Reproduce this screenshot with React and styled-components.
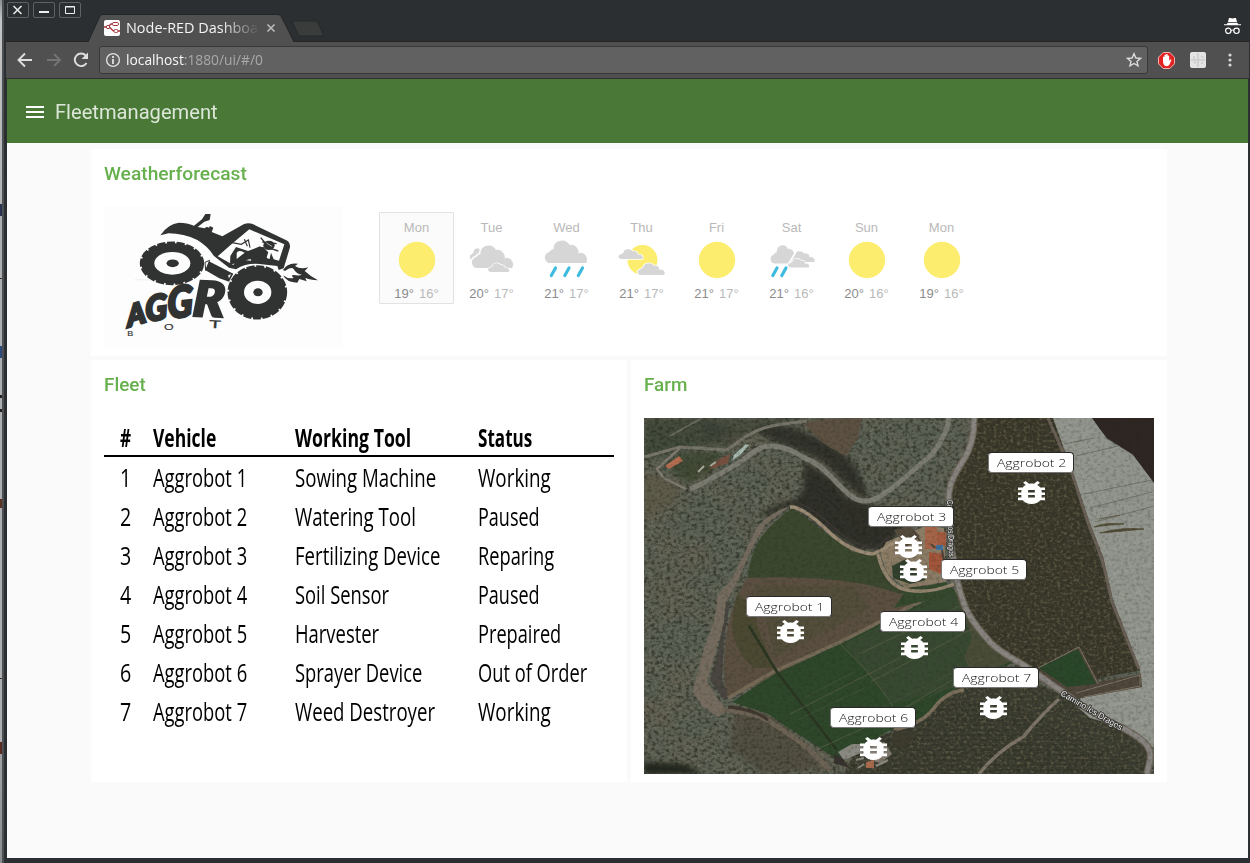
import React, { useLayoutEffect, useRef } from "react";
import styled, { createGlobalStyle } from "styled-components";

const GlobalStyle = createGlobalStyle`
  * { box-sizing: border-box; }
  html, body { margin: 0; padding: 0; }
  body { overflow: hidden; background: #a9aaab; font-family: Roboto, "Liberation Sans", sans-serif; }
  svg { display: block; }
`;

/* ---------- text stretched to a known width ---------- */
const FitSpan = styled.span`
  display: inline-block;
  white-space: pre;
  transform-origin: 0 50%;
`;
const FitBox = styled.span`
  display: block;
  width: ${(p) => p.$width}px;
`;
function Fit({ width, children }) {
  const ref = useRef(null);
  useLayoutEffect(() => {
    const apply = () => {
      const el = ref.current;
      if (el) el.style.transform = `scaleX(${width / el.offsetWidth})`;
    };
    apply();
    document.fonts.ready.then(apply);
  }, [width]);
  return (
    <FitBox $width={width}>
      <FitSpan ref={ref}>{children}</FitSpan>
    </FitBox>
  );
}

/* ---------- browser window ---------- */
const Desktop = styled.div`
  display: flex;
  width: 1250px;
  height: 863px;
  background: #2b2f31;
`;
const Behind = styled.div`
  flex: none;
  width: 2px;
  background: linear-gradient(
    #8f9192 0, #c4c5c6 20px, #b0b1b2 204px, #2b3350 204px, #2b3350 216px, #adaeaf 216px,
    #adaeaf 278px, #333 278px, #333 279px, #adaeaf 279px, #adaeaf 346px, #2d4a78 346px,
    #2d4a78 358px, #adaeaf 358px, #adaeaf 395px, #222 395px, #222 398px, #adaeaf 398px,
    #adaeaf 409px, #222 409px, #222 412px, #adaeaf 412px, #adaeaf 499px, #5b3425 499px,
    #5b3425 508px, #adaeaf 508px, #adaeaf 678px, #333 678px, #333 679px, #adaeaf 679px,
    #adaeaf 742px, #5b2a20 742px, #5b2a20 754px, #9fa0a2 754px, #8a8d90 863px
  );
`;
const Frame = styled.div`
  flex: 1;
  display: flex;
  flex-direction: column;
  border-left: 2px solid #4c5052;
  padding: 0 0 5px;
  background: #2b2f31;
`;
const TitleBar = styled.div`
  display: flex;
  height: 41px;
  flex: none;
  background: #2b2f31;
`;
const WindowButtons = styled.div`
  display: flex;
  gap: 4px;
  padding: 2px 0 0 3px;
  width: 84px;
`;
const WindowButton = styled.div`
  width: 22px;
  height: 16px;
  border: 1px solid #5e6264;
  border-radius: 2px;
`;
const Tab = styled.div`
  position: relative;
  display: flex;
  width: 206px;
  height: 28px;
  margin-top: 14px;
  padding: 0 16px 0 16px;
  align-items: center;
`;
const TabShape = styled.svg`
  position: absolute;
  left: 0;
  top: 0;
`;
const TabTitle = styled.div`
  position: relative;
  width: 132px;
  margin-left: 6px;
  color: #f4f4f4;
  font: 500 14px/20px "Open Sans", "Noto Sans", sans-serif;
  mask-image: linear-gradient(90deg, #000 72%, transparent 101%);
`;
const TabIcon = styled.svg`
  position: relative;
`;
const CloseIcon = styled.svg`
  position: relative;
  margin-left: 8px;
`;
const NewTab = styled.svg`
  margin: 20px 0 0 -4px;
`;
const Incognito = styled.svg`
  margin: 18px 9px 0 auto;
`;
const NavBar = styled.div`
  display: flex;
  align-items: center;
  flex: none;
  height: 38px;
  margin: 0 1px 0 2px;
  padding: 0 8px 0 10px;
  background: #505050;
  border-top: 1px solid #252525;
  border-bottom: 1px solid #303030;
`;
const NavIcon = styled.svg`
  flex: none;
  margin-right: ${(p) => p.$gap ?? 0}px;
`;
const AddressBar = styled.div`
  display: flex;
  align-items: center;
  width: 1049px;
  height: 28px;
  margin-right: 10px;
  padding: 0 5px;
  background: #616161;
  border: 1px solid #393939;
  border-radius: 3px;
`;
const Url = styled.div`
  flex: 1;
  margin-left: 5px;
  color: #a9a9a9;
  font: 500 14px/20px "Open Sans", "Noto Sans", sans-serif;
  b { font-weight: 500; color: #f8f8f8; }
`;
const Viewport = styled.div`
  flex: 1;
  margin: 0 2px 0 3px;
  background: #fafafa;
`;

/* ---------- dashboard ---------- */
const AppBar = styled.header`
  display: flex;
  align-items: center;
  height: 64px;
  padding: 1px 0 0 19px;
  gap: 11px;
  background: #4a7937;
  color: #dde7d9;
  font: 400 20px/24px Roboto, sans-serif;
`;
const Board = styled.main`
  display: grid;
  grid-template-columns: 536px 536px;
  grid-template-rows: 207px 422px;
  gap: 4px;
  padding: 6px 0 0 84px;
`;
const Card = styled.section`
  grid-column: ${(p) => (p.$wide ? "1 / 3" : "auto")};
  background: #fff;
  padding: 13px 13px 0;
`;
const CardTitle = styled.h2`
  margin: 0;
  color: #66b04d;
  font: 500 18px/24px Roboto, sans-serif;
`;
const WeatherRow = styled.div`
  display: flex;
  align-items: flex-start;
  margin-top: 20px;
`;
const Forecast = styled.div`
  display: flex;
  margin: 6px 0 0 36px;
`;
const Day = styled.div`
  width: 75px;
  height: 92px;
  padding-top: 7px;
  display: flex;
  flex-direction: column;
  align-items: center;
  border: 1px solid ${(p) => (p.$active ? "#e2e2e2" : "transparent")};
  border-radius: 1px;
  background: ${(p) => (p.$active ? "#fbfbfb" : "transparent")};
  color: #b9b9b9;
  font: 13px/15px "Liberation Sans", Arial, sans-serif;
`;
const Temps = styled.div`
  display: flex;
  gap: 5px;
  b { font-weight: 400; color: #8b8b8b; }
`;

const Grid = styled.div`
  margin-top: 21px;
`;
const GridRow = styled.div`
  display: grid;
  grid-template-columns: 49px 142px 183px 136px;
  align-items: center;
  height: 39px;
  color: #000;
  font: ${(p) => (p.$head ? 700 : 400)} 25px/38px "Open Sans", "Noto Sans", sans-serif;
  border-bottom: ${(p) => (p.$head ? "2px solid #000" : "0")};
`;
const NumberCell = styled.div`
  padding-left: 16px;
`;

const MapBox = styled.div`
  position: relative;
  width: 510px;
  height: 356px;
  margin-top: 21px;
  overflow: hidden;
`;
const PinLabel = styled.div`
  position: absolute;
  left: ${(p) => p.$x}px;
  top: ${(p) => p.$y}px;
  width: 86px;
  height: 21px;
  padding: 0 0 0 8px;
  background: #fff;
  border: 1px solid #292929;
  border-left-color: #777;
  border-bottom-color: #777;
  border-radius: 4px;
  color: #111;
  font: 300 11.5px/19px "Open Sans", "Noto Sans", sans-serif;
`;
const Bug = styled.svg`
  position: absolute;
  left: ${(p) => p.$x}px;
  top: ${(p) => p.$y}px;
`;

/* ---------- weather icons ---------- */
const Cloud = ({ x, y, w, h, halo }) => (
  <svg x={x} y={y} width={w} height={h} viewBox="0 0 40 23" preserveAspectRatio="none" overflow="visible">
    <path
      d="M4 23A5.5 5.5 0 0 1 1.800 12A6 6 0 0 1 6 9A8.500 8.500 0 0 1 22 5A7.500 7.500 0 0 1 31 13.500A5.500 5.500 0 0 1 38.500 16Q40.500 19 38.700 23Z"
      fill="#d6d6d6"
      stroke={halo ? "#fff" : "none"}
      strokeWidth={halo ? 3 : 0}
      paintOrder="stroke"
    />
  </svg>
);
const Rain = ({ x, y }) => (
  <path d={`M${x} ${y}l-4.200 7.500`} stroke="#3fbbe0" strokeWidth="3.200" strokeLinecap="round" />
);
function WeatherIcon({ kind }) {
  return (
    <svg width="47" height="51" viewBox="0 -1 47 51">
      {kind === "sun" && <circle cx="24" cy="24" r="18.200" fill="#fced6f" />}
      {kind === "cloudy" && (
        <>
          <Cloud x={3} y={12} w={17} h={12} />
          <Cloud x={6.500} y={9} w={39} h={23} halo />
          <Cloud x={21.500} y={27} w={20} h={9} halo />
        </>
      )}
      {kind === "rain" && (
        <>
          <Cloud x={4.500} y={4} w={40} h={23} />
          <Rain x={12.500} y={32} />
          <Rain x={26} y={32} />
          <Rain x={39.500} y={32} />
        </>
      )}
      {kind === "partly" && (
        <>
          <circle cx="24.500" cy="24" r="15" fill="#fced6f" />
          <Cloud x={2} y={13} w={23} h={10} halo />
          <Cloud x={21.500} y={27} w={25.500} h={12} halo />
        </>
      )}
      {kind === "showers" && (
        <>
          <clipPath id="front-cloud"><path d="M0 0H36L18.500 30H0Z" /></clipPath>
          <clipPath id="back-cloud"><path d="M38 0H47V30H20.500Z" /></clipPath>
          <g clipPath="url(#front-cloud)"><Cloud x={4.500} y={9} w={28} h={18.500} /></g>
          <g clipPath="url(#back-cloud)"><Cloud x={23} y={15} w={24} h={11} /></g>
          <Cloud x={21.500} y={22.500} w={20} h={9} halo />
          <Rain x={9} y={32} />
          <Rain x={18} y={32} />
        </>
      )}
    </svg>
  );
}

/* ---------- tractor logo ---------- */
const LogoSvg = styled.svg`
  font-family: "Liberation Sans", sans-serif;
  .heavy {
    font-family: Lato, sans-serif;
    font-weight: 900;
    font-style: italic;
    stroke: #313333;
    stroke-width: 8px;
  }
`;
function Wheel({ cx, cy, rx, ry, hx, hy }) {
  return (
    <g>
      <ellipse cx={cx} cy={cy} rx={rx} ry={ry} />
      <ellipse cx={cx} cy={cy} rx={rx} ry={ry} fill="none" stroke="#313333" strokeWidth="9" strokeDasharray="24 5" />
      <ellipse cx={cx + 1} cy={cy} rx={hx} ry={hy} fill="#fdfdfe" />
      <ellipse cx={cx + 2} cy={cy} rx={hx * 0.34} ry={hy * 0.34} />
    </g>
  );
}
function Logo() {
  return (
    <LogoSvg width="239" height="141" viewBox="42 184 717 423">
      <rect x="42" y="184" width="717" height="423" fill="#fdfdfe" />
      <g fill="#313333">
        <path d="M211 272Q234 237 267 234Q292 234 312 243L336 224L346 208H362L359 226L343 231L323 247L344 251Q350 244 357 249L360 244L370 249L365 262L397 275L461 239Q473 233 486 237L589 287Q601 293 600 308L581 371L566 376L562 364L508 358Q468 355 438 374L417 369L371 333Q355 306 322 286Q281 266 236 266Z" />
        <path d="M478 254L583 299L567 348L551 344L543 324L539 343L530 340L534 323L520 306L508 309L486 328L483 348L441 343L430 361L383 335L426 297Z" fill="#fdfdfe" />
        <path d="M426 294L454 299L475 286L480 309M463 284L472 305" fill="none" stroke="#313333" strokeWidth="3.500" />
        <path d="M421 334L438 307L474 319L510 305L535 323L522 348L478 344L420 360Z" />
        <path d="M440 325Q444 316 455 320L464 324L440 343Z" fill="#fdfdfe" />
        <ellipse cx="537" cy="302" rx="17" ry="14" />
        <path d="M512 279L531 301M543 312L565 319M517 292L560 297" stroke="#313333" strokeWidth="4" />
        <path d="M529 295l17 10" stroke="#aaa" strokeWidth="3" />
        <path d="M355 349L430 387L417 411L388 401L345 376Z" />
        <path d="M345 353L359 347L347 377ZM413 391L426 386L416 406Z" fill="#fdfdfe" stroke="#313333" strokeWidth="3" />
        <path d="M579 376Q593 352 624 357L615 364Q631 375 655 368L644 379Q659 393 684 407Q659 405 646 400L650 410L628 403L622 414Q589 413 579 392Q594 404 611 400Q601 391 611 391Q629 394 636 390Q619 389 611 373Q603 365 585 379Z" />
        <path d="M134 405Q180 402 220 414" stroke="#f0f1f2" strokeWidth="3" fill="none" />
        <Wheel cx={246} cy={356} rx={92} ry={61} hx={54} hy={34} />
        <Wheel cx={502} cy={443} rx={85} ry={77} hx={41} hy={35} />
        <g className="heavy">
          <text transform="translate(115 548) rotate(-17) skewX(-10)" fontSize="86" textLength="57" lengthAdjust="spacingAndGlyphs">A</text>
          <text transform="translate(168 531) rotate(-9) skewX(-6)" fontSize="104" textLength="66" lengthAdjust="spacingAndGlyphs">G</text>
          <text transform="translate(233 521) rotate(-5) skewX(-4)" fontSize="130" textLength="76" lengthAdjust="spacingAndGlyphs">G</text>
          <text transform="translate(307 513) rotate(2) skewX(-2)" fontSize="144" textLength="94" lengthAdjust="spacingAndGlyphs">R</text>
        </g>
        <text x="112" y="575" fontSize="24" textLength="18" lengthAdjust="spacingAndGlyphs" stroke="#313333" strokeWidth=".5">B</text>
        <text x="222" y="555" fontSize="29" textLength="29" lengthAdjust="spacingAndGlyphs" stroke="#313333" strokeWidth=".5">O</text>
        <text transform="translate(357 549) rotate(3)" fontSize="33" textLength="36" lengthAdjust="spacingAndGlyphs" stroke="#313333">T</text>
      </g>
    </LogoSvg>
  );
}

/* ---------- aerial map ---------- */
const RIVER_ROAD = "M46 71C60 66 76 56 96 44C108 35 116 28 126 28C145 28 155 38 169 44C180 50 190 62 196 68C204 76 212 84 222 83C234 83 238 75 246 72C258 62 276 47 288 36C297 24 304 12 305 0";
const MAIN_ROAD = "M330 0C330 12 329 22 325 31C320 45 307 56 305 75C304 100 305 120 309 139C312 155 313 166 318 180C323 197 332 208 346 224C357 235 368 240 378 246C397 258 408 267 419 274C436 287 455 300 479 310C497 320 509 328 506 342L503 356";
const ORCHARD = "M331 0H409L466 172L497 252L436 264L394 256L346 222L318 180L309 139L305 80L312 56L326 30Z";
const GROVE = "M362 249L419 278L480 312L506 335L503 356H200L215 325L276 305L309 272Z";
function Aerial() {
  return (
    <svg width="510" height="356" viewBox="0 0 510 356">
      <defs>
        <filter id="dark" x="0" y="0" width="1" height="1" colorInterpolationFilters="sRGB">
          <feTurbulence type="fractalNoise" baseFrequency=".26 .32" numOctaves="4" seed="4" />
          <feColorMatrix values="0 0 0 0 .12  0 0 0 0 .13  0 0 0 0 .09  3 0 0 0 -1.35" />
        </filter>
        <filter id="light" x="0" y="0" width="1" height="1" colorInterpolationFilters="sRGB">
          <feTurbulence type="fractalNoise" baseFrequency=".2 .28" numOctaves="4" seed="11" />
          <feColorMatrix values="0 0 0 0 .47  0 0 0 0 .5  0 0 0 0 .42  2.6 0 0 0 -1.15" />
        </filter>
        <filter id="trees" x="0" y="0" width="1" height="1" colorInterpolationFilters="sRGB">
          <feTurbulence type="fractalNoise" baseFrequency=".3 .36" numOctaves="3" seed="23" />
          <feColorMatrix values="0 0 0 0 .42  0 0 0 0 .4  0 0 0 0 .3  4 0 0 0 -2" />
        </filter>
        <filter id="patch" x="0" y="0" width="1" height="1" colorInterpolationFilters="sRGB">
          <feTurbulence type="fractalNoise" baseFrequency=".02 .025" numOctaves="3" seed="7" />
          <feColorMatrix values="0 0 0 0 .42  0 0 0 0 .37  0 0 0 0 .3  3 0 0 0 -1.3" />
        </filter>
        <filter id="soft"><feGaussianBlur stdDeviation="2.500" /></filter>
        <filter id="edge"><feGaussianBlur stdDeviation=".5" /></filter>
        <clipPath id="plantations"><path d={ORCHARD} /><path d={GROVE} /></clipPath>
      </defs>
      <rect width="510" height="356" fill="#5a5f54" />
      <rect width="510" height="356" filter="url(#patch)" opacity=".45" />

      <rect width="510" height="356" filter="url(#dark)" opacity=".52" />
      <rect width="510" height="356" filter="url(#light)" opacity=".42" />
      <g filter="url(#soft)">
        <path d="M0 0H60L90 14L55 28L0 42Z" fill="#343a2c" opacity=".6" />
        <path d="M60 0H170L140 5L106 15L84 30L60 26Z" fill="#3a3f33" opacity=".6" />
        <path d="M20 46L40 34H78L70 52L44 66Z" fill="#38432f" opacity=".75" />
        <path d="M0 55L14 58L38 72L26 86L0 100Z" fill="#5d5848" opacity=".75" />
        <path d="M110 12Q135 2 160 14L195 30L214 52L224 78L218 80L200 64L180 44L150 30L128 22Z" fill="#282922" opacity=".78" />
        <path d="M160 44Q190 60 203 80L230 88L250 94L262 106L240 132L212 130L183 112L150 86L160 70Z" fill="#23241e" opacity=".82" />
        <path d="M160 88L146 85L120 96" stroke="#2a2a22" strokeWidth="5" fill="none" />
        <path d="M0 344L40 346L60 356H0Z" fill="#22281e" />
        <path d="M92 292Q130 290 150 318L180 350L120 356L85 330Z" fill="#4b4638" opacity=".6" />
      </g>
      <path d="M160 5Q180 0 218 0L214 20L202 38Q175 26 160 5Z" fill="#5b5143" filter="url(#edge)" />
      <path d={ORCHARD} fill="#363326" opacity=".88" />
      <path d={GROVE} fill="#37382c" opacity=".88" />
      <g clipPath="url(#plantations)">
        <rect width="510" height="356" filter="url(#trees)" opacity=".6" />
      </g>
      <g stroke="#26271d" strokeWidth="1" opacity=".45">
        {Array.from({ length: 14 }, (_, i) => (
          <path key={i} d={`M${232 + (i % 3) * 6} ${352 - i * 5}H${488 - i * 9}`} strokeDasharray="9 2 5 1" />
        ))}
      </g>

      <g filter="url(#edge)">
        {/* ravine */}
        <path d="M146 88Q122 96 111 113Q99 140 86 164L74 176L70 204L60 230L52 260L49 274L58 288L74 299L83 292L72 278L63 264L72 232L80 204L82 184L95 160L108 130L122 106Z" fill="#756c5f" />
        <path d="M82 184L80 204L72 240L66 262L80 282L86 280L78 262L80 220L86 184Z" fill="#4a4540" />
        <path d="M78 292Q112 294 128 305Q152 320 168 334L186 352" stroke="#6c6355" strokeWidth="5" fill="none" />
        <path d="M84 289Q112 292 124 302" stroke="#40382f" strokeWidth="3" fill="none" />

        {/* fields */}
        <path d="M149 90Q122 108 112 128Q105 145 103 162Q150 158 190 164Q225 168 250 182L309 166L256 170L242 160L235 136L209 134L183 116Z" fill="#3b462d" />
        <path d="M103 160Q150 158 190 162Q230 166 256 176L308 167L236 204L84 280Q78 262 81 230Q84 190 103 160Z" fill="#5a5040" />
        <path d="M93 175Q112 190 113 208L130 250H110Q90 235 88 205Z" fill="#424529" opacity=".6" />
        <path d="M110 168L210 168L226 190L130 240Q124 200 110 168Z" fill="#484832" opacity=".35" />
        <path d="M88 284L129 257L196 226L308 170L318 183L330 204L350 227L370 244L309 272L276 304L246 312L200 340L188 338L143 309L124 296Z" fill="#2f472b" />
        <path d="M200 226L308 171L330 204L350 227L368 244L309 270L249 286Z" fill="#3c4933" opacity=".65" />
        <path d="M310 172L350 227L366 244L330 258L320 240L328 220Z" fill="#5e5441" opacity=".5" />
        <path d="M84 280L129 254L196 224L308 167" stroke="#766a56" strokeWidth="3.500" fill="none" />
        <path d="M105 208L133 254L193 332" stroke="#2b3523" strokeWidth="2.500" fill="none" />
        <path d="M196 226Q225 252 249 288M146 296L256 240M176 330L250 296L308 262M226 264L330 210M215 236L320 186" stroke="#66664a" strokeWidth="1" fill="none" opacity=".6" />
        <path d="M220 298L340 240M240 300L345 250M160 280L210 254M154 302L220 270" stroke="#536246" strokeWidth="1" fill="none" opacity=".4" />

        {/* farm yard */}
        <path d="M242 124L262 116L282 108L300 110L302 164L262 170L244 156L236 136Z" fill="#8b7b66" />
        <path d="M250 112L266 108L276 118L262 130Z" fill="#544c3e" />
        <path d="M248 148L262 141L282 162L266 166L249 160Z" fill="#33402d" />
        <path d="M262 172L302 164L312 176L250 190Z" fill="#35492e" />
        <path d="M146 89Q158 88 183 112Q205 134 229 136Q244 130 256 120" stroke="#9c8b75" strokeWidth="3.500" fill="none" />
        <path d="M149 84Q165 86 190 110Q210 128 232 130L246 118" stroke="#3b3732" strokeWidth="2" fill="none" />
        <path d="M234 136Q240 162 256 170Q280 178 310 166" stroke="#94856f" strokeWidth="3.500" fill="none" />
        <path d="M281 109h12v22h-12z" fill="#a7654a" />
        <path d="M293 114h9v14h-9z" fill="#a45b41" />
        <path d="M285 134l15 2l-3 20l-12 -5z" fill="#a1553a" />
        <path d="M287 126l4 4M270 114l8 12M298 132l3 16" stroke="#51453a" strokeWidth="2" />
        <path d="M292 127h7v5h-7z" fill="#4272a0" />

        {/* greenhouses and dark plot in the corner */}
        <path d="M446 0H510V65L488 36L463 20Z" fill="#2f2624" />
        <path d="M409 0H448L463 21L489 37L510 65V330L479 309L446 300L419 276L431 279L497 269L496 252L469 182L459 139L446 105L429 55Z" fill="#92958d" />
        <path d="M404 0L428 55L445 108L458 140L468 184L495 251" stroke="#6b6057" strokeWidth="3" fill="none" />
        <path d="M422 4L436 48L452 98L466 144L488 205L510 250M434 0L470 108L510 210" stroke="#9da198" strokeWidth="1" fill="none" opacity=".6" />
        <path d="M420 26L450 20M432 38L474 28M440 76L508 62M446 90L508 74M451 104L510 88" stroke="#666a60" strokeWidth=".8" fill="none" />
        <path d="M450 109Q460 104 480 106Q462 107 450 109M456 115Q475 109 500 111Q480 113 456 115M455 101L476 97" fill="#504a35" stroke="#504a35" strokeWidth=".8" />
        <path d="M465 132L510 120M470 156L510 145M474 180L510 170M484 214L510 208M492 240L510 236M475 276L510 268M450 290L510 280M480 306L510 300" stroke="#9ca198" strokeWidth="2" opacity=".5" />

        {/* reservoir and sheds */}
        <path d="M394 250L435 228L455 264L497 256L498 269L432 281L418 273Z" fill="#50463a" />
        <path d="M395 250L434 231L452 266L423 269Z" fill="#2b472b" />
        <path d="M394 250L435 229L454 266M432 275L496 257V268L440 279" stroke="#7e7567" fill="none" />

        {/* roads */}
        <path d="M0 39L36 29L83 32L104 17Q120 8 139 6L163 3" stroke="#77756a" strokeWidth="3" fill="none" />
        <path d="M36 30L13 51L20 60L42 71" stroke="#7f7a6f" strokeWidth="2.500" fill="none" />
        <path d="M26 18L58 0" stroke="#6b6a60" strokeWidth="2" fill="none" />
        <path d={RIVER_ROAD} stroke="#7c7b73" strokeWidth="5" fill="none" />
        <path d={MAIN_ROAD} stroke="#6f675c" strokeWidth="7" fill="none" />
        <path d={MAIN_ROAD} stroke="#898581" strokeWidth="4.500" fill="none" />
        <path d="M415 281Q400 294 379 319Q352 334 335 356" stroke="#7d7467" strokeWidth="3.500" fill="none" />
        <path d="M320 272Q302 274 290 290Q278 306 250 312" stroke="#7c705c" strokeWidth="3.500" fill="none" />

        {/* buildings */}
        <path d="M21 48L35 38L39 43L25 51Z" fill="#b36c50" />
        <path d="M64 52L74 42L86 36L84 45L70 50Z" fill="#76503f" />
        <path d="M54 54L60 48M66 48L72 44" stroke="#aaa99e" strokeWidth="2" />
        <path d="M88 43L90 37L102 26L105 27L97 36Z" fill="#a9bcb4" />
        <path d="M194 334L208 326L218 326L224 332L200 342Z" fill="#8b8a82" />
        <path d="M190 336L198 340L206 350L190 345Z" fill="#37322e" />
        <path d="M225 329L240 324L248 336L236 345L226 342Z" fill="#857e74" />
        <path d="M222 344L230 342L230 350H222Z" fill="#aa6a4d" />
        <path d="M212 342L220 340M232 348L244 342M214 350L220 346" stroke="#8f8d83" strokeWidth="2" />
        <path d="M250 312L270 316L260 332L248 326Z" fill="#3e3a2f" />
      </g>
      <rect width="510" height="356" filter="url(#dark)" opacity=".2" />

      <g
        fontFamily="Liberation Sans, sans-serif"
        fontSize="8.500"
        fill="#f1f1f1"
        stroke="#33332f"
        strokeWidth="2"
        paintOrder="stroke"
      >
        <text transform="translate(416 277) rotate(30.5)" textLength="70">Camino los Dragos</text>
        <text transform="translate(303 82) rotate(88)" textLength="57" lengthAdjust="spacingAndGlyphs">Camino los Dragos</text>
      </g>
    </svg>
  );
}

const BUG_PATH =
  "M20 8h-2.810c-.45-.78-1.070-1.450-1.820-1.960L17 4.410 15.590 3l-2.170 2.170C12.960 5.060 12.490 5 12 5c-.49 0-.96.06-1.410.17L8.410 3 7 4.410l1.620 1.630C7.880 6.550 7.260 7.220 6.810 8H4v2h2.090c-.05.33-.09.66-.09 1v1H4v2h2v1c0 .34.04.67.09 1H4v2h2.810c1.040 1.790 2.970 3 5.190 3s4.150-1.210 5.190-3H20v-2h-2.090c.05-.33.09-.66.09-1v-1h2v-2h-2v-1c0-.34-.04-.67-.09-1H20V8zm-6 8h-4v-2h4v2zm0-4h-4v-2h4v2z";

const days = [
  ["Mon", "sun", 19, 16],
  ["Tue", "cloudy", 20, 17],
  ["Wed", "rain", 21, 17],
  ["Thu", "partly", 21, 17],
  ["Fri", "sun", 21, 17],
  ["Sat", "showers", 21, 16],
  ["Sun", "sun", 20, 16],
  ["Mon", "sun", 19, 16],
];
const fleet = [
  ["Sowing Machine", 141, "Working", 73],
  ["Watering Tool", 121, "Paused", 62],
  ["Fertilizing Device", 145, "Reparing", 76],
  ["Soil Sensor", 94, "Paused", 62],
  ["Harvester", 84, "Prepaired", 83],
  ["Sprayer Device", 127, "Out of Order", 109],
  ["Weed Destroyer", 140, "Working", 73],
];
const pins = [
  { n: 1, label: [102, 178], bug: [133, 202] },
  { n: 2, label: [344, 34], bug: [374, 63] },
  { n: 3, label: [224, 88], bug: [251, 117] },
  { n: 5, label: [297, 141], bug: [256, 141] },
  { n: 4, label: [236, 193], bug: [257, 218] },
  { n: 7, label: [309, 249], bug: [336, 278] },
  { n: 6, label: [186, 289], bug: [216, 319] },
];

export default function App() {
  return (
    <Desktop>
      <GlobalStyle />
      <Behind />
      <Frame>
        <TitleBar>
          <WindowButtons>
            <WindowButton>
              <svg width="20" height="14"><path d="M5.500 3l8 8M13.500 3l-8 8" stroke="#eee" strokeWidth="1.500" /></svg>
            </WindowButton>
            <WindowButton>
              <svg width="20" height="14"><path d="M5 9h10" stroke="#eee" strokeWidth="2" /></svg>
            </WindowButton>
            <WindowButton>
              <svg width="20" height="14"><path d="M5.500 3.500h9v7h-9zM5 4h10" stroke="#eee" fill="none" /></svg>
            </WindowButton>
          </WindowButtons>
          <Tab>
            <TabShape width="206" height="28">
              <path d="M0 28L12 2Q13 .5 15 .5H189Q192 .5 193 2L206 28Z" fill="#505050" />
              <path d="M0 28L12 2Q13 .5 15 .5H189Q192 .5 193 2L206 28" fill="none" stroke="#232627" />
            </TabShape>
            <TabIcon width="16" height="16">
              <rect width="16" height="16" rx="2" fill="#fff" />
              <path d="M0 7H4L7 4H9M4 7C8 7 7 11 10 11M13 11H16" stroke="#a6353b" strokeWidth="1.300" fill="none" />
              <rect x="8.500" y="2.500" width="6" height="3" rx="1.300" stroke="#a6353b" fill="#fff" />
              <rect x="10" y="9.500" width="4" height="3" rx="1.300" stroke="#a6353b" fill="#fff" />
              <circle cx="4" cy="7" r="1.700" fill="#fff" stroke="#a6353b" />
            </TabIcon>
            <TabTitle><Fit width={132}>Node-RED Dashboa</Fit></TabTitle>
            <CloseIcon width="10" height="10"><path d="M1.500 1.500l7 7M8.500 1.500l-7 7" stroke="#bdbdbd" strokeWidth="1.600" /></CloseIcon>
          </Tab>
          <NewTab width="36" height="18"><path d="M2 1H25Q27 1 28 3L34 16H11Q9 16 8 14Z" fill="#3a3b3b" stroke="#262a2b" /></NewTab>
          <Incognito width="17" height="17" viewBox="0 0 17 17">
            <path d="M5 0h1.500l2 .6 2-.6H12l1 4H4zM3.500 4.700h10l.5 1.500h3v1H0v-1h3z" fill="#fff" />
            <circle cx="4.300" cy="12.800" r="2.700" fill="none" stroke="#fff" strokeWidth="1.200" />
            <circle cx="12.500" cy="12.800" r="2.700" fill="none" stroke="#fff" strokeWidth="1.200" />
            <path d="M7 12.500q1.500-.8 3 0" fill="none" stroke="#fff" />
          </Incognito>
        </TitleBar>
        <NavBar>
          <NavIcon $gap={12} width="18" height="18" viewBox="0 0 18 18"><path d="M16 9H2.500M9 2.500L2.500 9L9 15.500" fill="none" stroke="#dedede" strokeWidth="1.900" /></NavIcon>
          <NavIcon $gap={11} width="16" height="18" viewBox="0 0 16 18"><path d="M1 9H14M8 3L14 9L8 15" fill="none" stroke="#747474" strokeWidth="1.900" /></NavIcon>
          <NavIcon $gap={10} width="16" height="18" viewBox="0 0 16 18"><path d="M13.500 12A6.300 6.300 0 1 1 12.800 4.600" fill="none" stroke="#dedede" strokeWidth="1.900" /><path d="M15 1.500V8H8.500Z" fill="#dedede" /></NavIcon>
          <AddressBar>
            <NavIcon width="16" height="16"><circle cx="8" cy="8" r="6.400" fill="none" stroke="#e0e0e0" strokeWidth="1.400" /><path d="M8 7v5M8 4v2" stroke="#e0e0e0" strokeWidth="1.800" /></NavIcon>
            <Url><Fit width={137}><b>localhost</b>:1880/ui/#/0</Fit></Url>
            <NavIcon width="16" height="16"><path d="M8 1.800L9.900 6L14.400 6.400L11 9.400L12 13.900L8 11.500L4 13.900L5 9.400L1.600 6.400L6.100 6Z" fill="none" stroke="#dedede" strokeWidth="1.400" /></NavIcon>
          </AddressBar>
          <NavIcon $gap={15} width="17" height="17" viewBox="0 0 17 17">
            <path d="M5.200 .5h6.600l4.700 4.700v6.600l-4.700 4.700H5.200L.5 11.800V5.200z" fill="#e32322" stroke="#f0b3b0" />
            <path d="M5 9V5q.8-.8 1.500 0V3q.8-.8 1.600 0V2.300q.8-.8 1.600 0V4q.8-.8 1.500 0v5q1-2 2.300-1.200L11.500 12.500q-.8 1.700-3 1.700Q5 14 5 9z" fill="#fff" />
          </NavIcon>
          <NavIcon $gap={21} width="16" height="16"><rect width="16" height="16" rx="2" fill="#e5e5e5" /><path d="M8 1v14M1 8h14M4 4v3M11 4l3 2M4 11l2-1M12 10v2" stroke="#cacaca" strokeWidth="1.500" /></NavIcon>
          <NavIcon width="6" height="16"><g fill="#d8d8d8"><circle cx="3" cy="3" r="1.600" /><circle cx="3" cy="8" r="1.600" /><circle cx="3" cy="13" r="1.600" /></g></NavIcon>
        </NavBar>
        <Viewport>
          <AppBar>
            <svg width="18" height="12"><path d="M0 1h18M0 6h18M0 11h18" stroke="#fff" strokeWidth="2" /></svg>
            <Fit width={163}>Fleetmanagement</Fit>
          </AppBar>
          <Board>
            <Card $wide>
              <CardTitle><Fit width={143}>Weatherforecast</Fit></CardTitle>
              <WeatherRow>
                <Logo />
                <Forecast>
                  {days.map(([name, kind, hi, lo], i) => (
                    <Day key={i} $active={i === 0}>
                      {name}
                      <WeatherIcon kind={kind} />
                      <Temps><b>{hi}°</b><span>{lo}°</span></Temps>
                    </Day>
                  ))}
                </Forecast>
              </WeatherRow>
            </Card>
            <Card>
              <CardTitle><Fit width={42}>Fleet</Fit></CardTitle>
              <Grid>
                <GridRow $head>
                  <NumberCell><Fit width={11}>#</Fit></NumberCell>
                  <Fit width={63}>Vehicle</Fit>
                  <Fit width={116}>Working Tool</Fit>
                  <Fit width={54}>Status</Fit>
                </GridRow>
                {fleet.map(([tool, toolWidth, status, statusWidth], i) => (
                  <GridRow key={i}>
                    <NumberCell><Fit width={11}>{i + 1}</Fit></NumberCell>
                    <Fit width={94}>{`Aggrobot ${i + 1}`}</Fit>
                    <Fit width={toolWidth}>{tool}</Fit>
                    <Fit width={statusWidth}>{status}</Fit>
                  </GridRow>
                ))}
              </Grid>
            </Card>
            <Card>
              <CardTitle><Fit width={43}>Farm</Fit></CardTitle>
              <MapBox>
                <Aerial />
                {pins.map(({ n, label, bug }) => (
                  <React.Fragment key={n}>
                    <Bug $x={bug[0]} $y={bug[1]} width="27" height="23" viewBox="4 3 16 18" preserveAspectRatio="none">
                      <path d={BUG_PATH} fill="#fff" />
                    </Bug>
                    <PinLabel $x={label[0]} $y={label[1]}><Fit width={69}>{`Aggrobot ${n}`}</Fit></PinLabel>
                  </React.Fragment>
                ))}
              </MapBox>
            </Card>
          </Board>
        </Viewport>
      </Frame>
    </Desktop>
  );
}
